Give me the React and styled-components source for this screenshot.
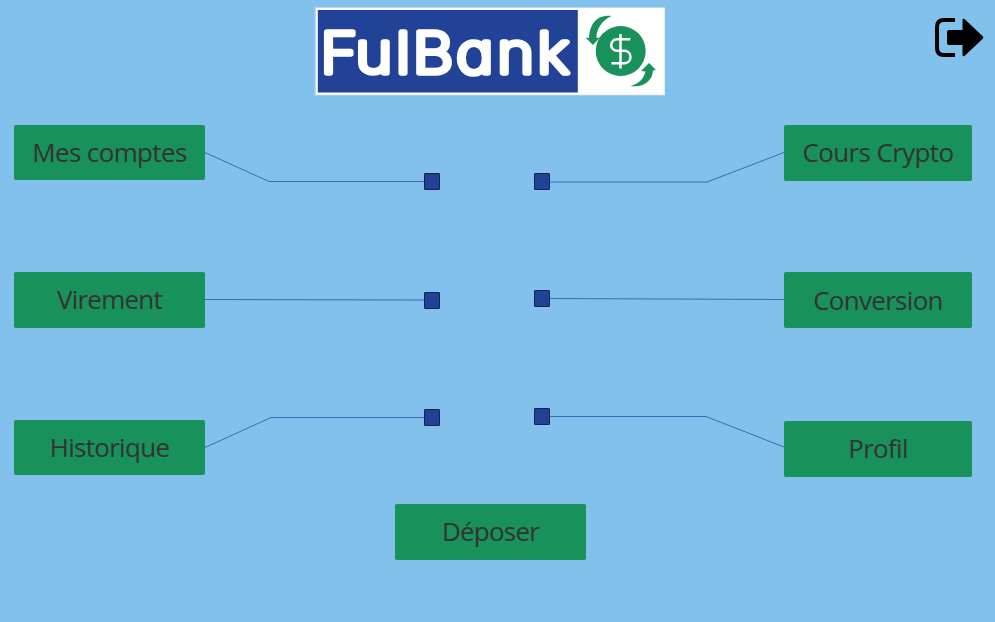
import React from "react";
import styled, { createGlobalStyle } from "styled-components";

const color = { sky: "#81c1eb", green: "#19915b", blue: "#224297", ink: "#333333" };

const GlobalStyle = createGlobalStyle`
  * { box-sizing: border-box; }
  body { margin: 0; background: ${color.sky}; overflow: hidden; }
`;

const Screen = styled.main`
  width: 995px;
  height: 622px;
  display: flex;
  flex-direction: column;
  background: ${color.sky};
  font-family: "Open Sans", "Noto Sans", sans-serif;
`;

const Header = styled.header`
  display: grid;
  grid-template-columns: 313px 352px 1fr;
  height: 125px;
  padding: 6px 11px 0 0;
`;

const Logo = styled.svg`
  grid-column: 2;
  width: 352px;
  height: 91px;
`;

const Wordmark = styled.text`
  font-family: Inter, sans-serif;
  font-size: 56px;
  font-weight: 200;
  font-feature-settings: "cv11" 1;
  fill: #fff;
  stroke: #fff;
  stroke-width: 5.6px;
  stroke-linejoin: round;
`;

const LogoutButton = styled.button`
  justify-self: end;
  width: 50px;
  height: 42px;
  margin-top: 11px;
  padding: 0;
  border: 0;
  background: none;
`;

const Menu = styled.nav`
  display: flex;
  flex-direction: column;
  gap: 92px;
  padding: 0 23px 0 14px;
`;

const MenuRow = styled.div`
  display: grid;
  grid-template-columns: 191px 235px 94px 250px 188px;
  height: 55.4px;
`;

const MenuButton = styled.button`
  grid-column: ${(p) => p.$column || "auto"};
  width: ${(p) => p.$width || 191}px;
  height: ${(p) => p.$height || 55.4}px;
  margin: ${(p) => p.$drop || 0}px 0 0;
  padding: 0 0 1.6px;
  border: 0;
  border-radius: 2px;
  background: ${color.green};
  color: ${color.ink};
  font: 400 26px/1 "Open Sans", "Noto Sans", sans-serif;
  letter-spacing: ${(p) => p.$tracking || 0}px;
  white-space: nowrap;
`;

const Connector = styled.svg`
  grid-column: ${(p) => p.$column};
  width: 100%;
  height: 56px;
  overflow: visible;
`;

const Wire = styled.polyline`
  fill: none;
  stroke: #3462ab;
  stroke-width: 0.9px;
`;

const Node = styled.rect`
  fill: ${color.blue};
  stroke: #14234d;
  stroke-width: 1px;
`;

const Footer = styled.footer`
  display: flex;
  padding: 28.8px 0 0 395px;
`;

const rows = [
  {
    left: { label: "Mes comptes", tracking: -0.65, wire: "0,27.5 64,56.5 219,56.5", y: 48.5 },
    right: { label: "Cours Crypto", tracking: -0.65, wire: "15,57 173,57 250,27.5", y: 48.5 },
  },
  {
    left: { label: "Virement", tracking: -0.75, wire: "0,27.5 219,28", y: 20.5 },
    right: { label: "Conversion", tracking: -0.7, wire: "15,26.5 250,27.5", y: 18.5 },
  },
  {
    left: { label: "Historique", tracking: -0.7, wire: "0,27.5 66,-2.5 219,-2.5", y: -10.5 },
    right: { label: "Profil", tracking: -0.7, drop: 1, wire: "15,-3.5 172,-3.5 250,27", y: -11.5 },
  },
];

function FulBankLogo() {
  return (
    <Logo viewBox="313 6 352 91" role="img" aria-label="FulBank">
      <rect x="314.5" y="6.8" width="351" height="89" fill="#a9cbe9" />
      <rect x="315.7" y="7.8" width="349" height="87" fill="#fff" />
      <rect x="317.8" y="10" width="260" height="82.5" fill={color.blue} />
      <Wordmark transform="translate(320.5 72.8) scale(1.12 1)" x="0 31.3 67.5 82.3 121.2 157.8 193.5">
        FulBank
      </Wordmark>
      <circle cx="620.7" cy="51" r="25" fill={color.green} />
      <g fill={color.green}>
        <path d="M611.5 16C598 14 589.5 23 589 38L585.5 37.5L593 45L600 37.5L596.5 38C596 30 602 20 611.5 16Z" />
        <path d="M630.5 86C643 88 652.5 81 653 70.5L656 70L649 63L641 71L645.5 71.5C644 78 639 84 630.5 86Z" />
      </g>
      <g fill="none" stroke="#fff" strokeWidth="2.5">
        <path d="M630.3 39.3H617A5.7 5.7 0 0 0 617 50.8H625A6.3 6.3 0 0 1 625 63.3H611.5" />
        <path d="M620.5 34V68.5" />
      </g>
    </Logo>
  );
}

function LogoutIcon() {
  return (
    <svg width="50" height="42" viewBox="934 17 50 42">
      <path d="M955 20H944Q937 20 937 27V48Q937 55 944 55H955" fill="none" stroke="#000" strokeWidth="4" />
      <path d="M949 30H962.5V20Q962.5 18 964.5 19L983 36.5Q983.7 37.5 983 38.5L964.5 56Q962.5 57 962.5 55V45H949Q947 45 947 43V32Q947 30 949 30Z" />
    </svg>
  );
}

export default function App() {
  return (
    <Screen>
      <GlobalStyle />
      <Header>
        <FulBankLogo />
        <LogoutButton aria-label="Déconnexion">
          <LogoutIcon />
        </LogoutButton>
      </Header>
      <Menu>
        {rows.map(({ left, right }) => (
          <MenuRow key={left.label}>
            <MenuButton $tracking={left.tracking}>{left.label}</MenuButton>
            <Connector $column={2}>
              <Wire points={left.wire} />
              <Node x="219.5" y={left.y} width="15" height="16" rx="0.5" />
            </Connector>
            <Connector $column={4}>
              <Wire points={right.wire} />
              <Node x="0.5" y={right.y} width="15" height="16" rx="0.5" />
            </Connector>
            <MenuButton $column={5} $width={188} $height={55.9} $drop={right.drop} $tracking={right.tracking}>
              {right.label}
            </MenuButton>
          </MenuRow>
        ))}
      </Menu>
      <Footer>
        <MenuButton $height={56} $tracking={-0.8}>Déposer</MenuButton>
      </Footer>
    </Screen>
  );
}
